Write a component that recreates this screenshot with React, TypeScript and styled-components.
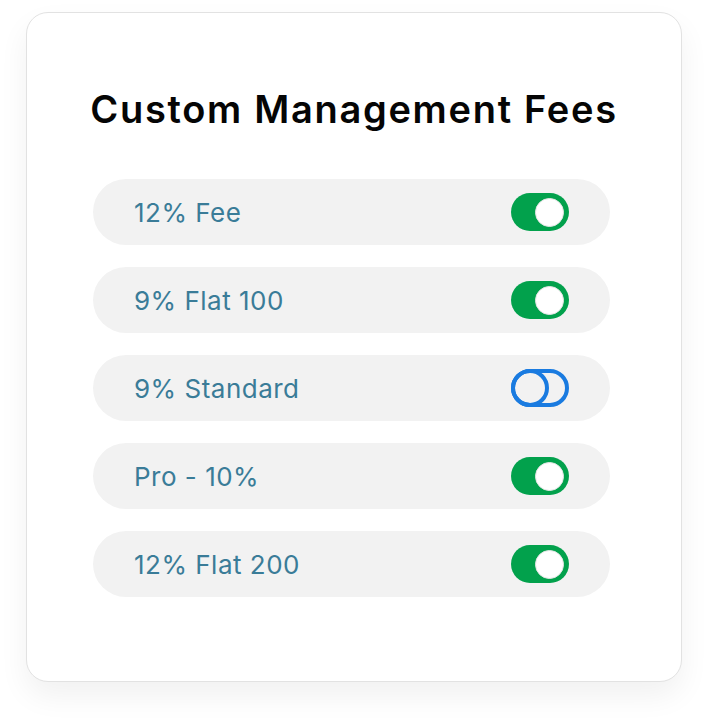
import React, { useState } from 'react';
import styled, { createGlobalStyle } from 'styled-components';

const GlobalStyle = createGlobalStyle`
	html, body {
		margin: 0;
		padding: 0;
		background: #ffffff;
	}
	body {
		font-family: Inter, 'Noto Sans', 'Liberation Sans', sans-serif;
	}
`;

const Page = styled.div`
	width: 707px;
	height: 719px;
	box-sizing: border-box;
	padding: 12px 25px 0 26px;
	background: #ffffff;
`;

const Card = styled.div`
	width: 656px;
	height: 670px;
	box-sizing: border-box;
	border: 1px solid #e2e2e2;
	border-radius: 22px;
	background: #ffffff;
	box-shadow: 0px 14px 30px rgba(0, 0, 0, 0.06);
	padding: 74px 71px 0 66px;
	display: flex;
	flex-direction: column;
	align-items: center;
`;

const Title = styled.h1`
	margin: 0 0 48px 5px;
	font-size: 38px;
	line-height: 44px;
	font-weight: 600;
	color: #050505;
	letter-spacing: 1.7px;
	white-space: nowrap;
`;

const List = styled.div`
	display: flex;
	flex-direction: column;
	gap: 22px;
	width: 100%;
`;

const Row = styled.div`
	display: flex;
	align-items: center;
	justify-content: space-between;
	height: 66px;
	border-radius: 33px;
	background: #f2f2f2;
	padding: 0 41px 0 41px;
`;

const Label = styled.span`
	font-size: 26px;
	font-weight: 400;
	letter-spacing: 0.5px;
	color: #3a7c98;
`;

const Toggle = styled.button<{ $on: boolean }>`
	position: relative;
	width: 58px;
	height: 38px;
	padding: 0;
	border-radius: 19px;
	cursor: pointer;
	box-sizing: border-box;
	border: ${(p) => (p.$on ? 'none' : '4px solid #1a7be0')};
	background: ${(p) => (p.$on ? '#02a14c' : 'transparent')};
`;

const Knob = styled.span<{ $on: boolean }>`
	position: absolute;
	top: ${(p) => (p.$on ? '4.5px' : '-4px')};
	left: ${(p) => (p.$on ? '24px' : '-4px')};
	width: ${(p) => (p.$on ? '29px' : '38px')};
	height: ${(p) => (p.$on ? '29px' : '38px')};
	box-sizing: border-box;
	border-radius: 50%;
	background: ${(p) => (p.$on ? '#ffffff' : 'transparent')};
	border: ${(p) => (p.$on ? '1px solid #e6e6e6' : '4px solid #1a7be0')};
`;

const fees = [
	{ name: '12% Fee', on: true },
	{ name: '9% Flat 100', on: true },
	{ name: '9% Standard', on: false },
	{ name: 'Pro - 10%', on: true },
	{ name: '12% Flat 200', on: true },
];

export default function App() {
	const [state, setState] = useState(fees.map((f) => f.on));

	const toggle = (i: number) => {
		setState((prev) => prev.map((v, idx) => (idx === i ? !v : v)));
	};

	return (
		<Page>
			<GlobalStyle />
			<Card>
				<Title>Custom Management Fees</Title>
				<List>
					{fees.map((fee, i) => (
						<Row key={fee.name}>
							<Label>{fee.name}</Label>
							<Toggle $on={state[i]} onClick={() => toggle(i)} aria-label={fee.name}>
								<Knob $on={state[i]} />
							</Toggle>
						</Row>
					))}
				</List>
			</Card>
		</Page>
	);
}
